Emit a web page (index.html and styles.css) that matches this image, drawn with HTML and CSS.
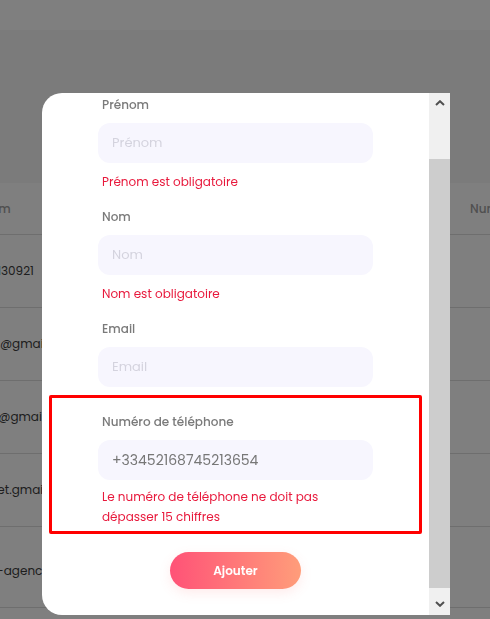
FILE: index.html
```html
<!DOCTYPE html>
<html lang="fr">
<head>
    <meta charset="UTF-8">
    <meta name="viewport" content="width=device-width, initial-scale=1.0">
    <title>Clients</title>
    <link rel="stylesheet" href="styles.css">
</head>
<body>

<div class="page">
    <div class="topbar"></div>

    <div class="card">
        <table class="clients">
            <thead>
                <tr><th>Nom</th><th>Email</th><th>Numéro</th></tr>
            </thead>
            <tbody>
                <tr><td>06130921</td><td></td><td></td></tr>
                <tr><td>luc@gmail.com</td><td></td><td></td></tr>
                <tr><td>ag@gmail.com</td><td></td><td></td></tr>
                <tr><td>onet.gmail.com</td><td></td><td></td></tr>
                <tr><td>rst-agency.fr</td><td></td><td></td></tr>
                <tr><td></td><td></td><td></td></tr>
            </tbody>
        </table>
    </div>
</div>

<div class="overlay"></div>

<div class="modal">
    <form class="modal-body">
        <div class="field">
            <label>Prénom</label>
            <input type="text" placeholder="Prénom">
            <div class="error">Prénom est obligatoire</div>
        </div>

        <div class="field">
            <label>Nom</label>
            <input type="text" placeholder="Nom">
            <div class="error">Nom est obligatoire</div>
        </div>

        <div class="field">
            <label>Email</label>
            <input type="text" placeholder="Email">
        </div>

        <div class="field-wrap invalid">
            <div class="field">
                <label>Numéro de téléphone</label>
                <input type="text" value="+33452168745213654">
                <div class="error narrow">Le numéro de téléphone ne doit pas dépasser 15 chiffres</div>
            </div>
        </div>

        <button type="button" class="button">Ajouter</button>
    </form>

    <div class="scrollbar">
        <div class="sb-top">
            <svg width="10" height="6" viewBox="0 0 10 6"><path d="M1 5 L5 1.2 L9 5" fill="none" stroke="#505050" stroke-width="2"/></svg>
        </div>
        <div class="sb-thumb"></div>
        <div class="sb-bottom">
            <svg width="10" height="6" viewBox="0 0 10 6"><path d="M1 1 L5 4.8 L9 1" fill="none" stroke="#505050" stroke-width="2"/></svg>
        </div>
    </div>
</div>

</body>
</html>
```

FILE: styles.css
```css
body {
    margin: 0;
    font-family: 'Poppins', 'Inter', sans-serif;
    background: #f7f7f7;
    overflow: hidden;
    height: 619px;
}

/* page behind the dialog */
.topbar {
    height: 30px;
    background: #fff;
}

.card {
    margin-top: 153px;
    background: #fff;
    margin-left: -18px;
}

.clients {
    border-collapse: collapse;
    width: 700px;
    font-size: 12px;
}

.clients th {
    height: 51px;
    padding: 0;
    text-align: left;
    font-weight: 500;
    color: #a0a0a0;
    font-size: 12px;
    border-bottom: 1px solid #ddd;
}

.clients td {
    height: 72px;
    padding: 0 0 0 0;
    color: #3c3c3c;
    border-bottom: 1px solid #ddd;
}

.clients tbody tr:nth-child(5) td {
    padding-top: 8px;
}

.clients th:nth-child(1), .clients td:nth-child(1) {
    width: 140px;
}

.clients th:nth-child(2) {
    width: 348px;
}

.overlay {
    position: fixed;
    inset: 0;
    background: rgba(0, 0, 0, 0.5);
}

/* dialog */
.modal {
    position: absolute;
    left: 42px;
    top: 93px;
    width: 408px;
    height: 522px;
    background: #fff;
    border-radius: 20px 0 0 20px;
    display: flex;
    overflow: hidden;
}

.modal-body {
    flex: 1;
    display: flex;
    flex-direction: column;
    align-items: center;
    padding-top: 2px;
    margin: 0;
}

.field {
    width: 275px;
    display: flex;
    flex-direction: column;
    margin-bottom: 15px;
}

.field label {
    font-size: 12px;
    font-weight: 500;
    color: #7a7a7a;
    line-height: 20px;
    padding-left: 4px;
    margin-bottom: 8px;
}

.field input {
    height: 40px;
    box-sizing: border-box;
    border: none;
    border-radius: 12px;
    background: #f7f6fe;
    padding: 0 14px;
    font-family: inherit;
    font-size: 13px;
    color: #777;
    outline: none;
}

.field input::placeholder {
    color: #d4d3de;
}

.field-wrap .field input {
    font-size: 14px;
}

.error {
    color: #e8193c;
    font-size: 12px;
    line-height: 20px;
    padding-left: 4px;
    margin-top: 9px;
}

.error.narrow {
    max-width: 240px;
    margin-top: 7px;
}

.field-wrap {
    width: 367px;
    margin-top: -7px;
    padding: 14px 0 4px;
    display: flex;
    justify-content: center;
    border: 3px solid #ff0000;
    border-radius: 2px;
}

.field-wrap .field {
    margin-bottom: 0;
}

.button {
    margin-top: 18px;
    width: 131px;
    height: 37px;
    border: none;
    border-radius: 19px;
    background: linear-gradient(90deg, #ff5277, #ff9d7a);
    color: #fff;
    font-family: inherit;
    font-size: 12px;
    font-weight: 600;
    padding-top: 2px;
    box-shadow: 0 4px 12px rgba(255, 120, 120, 0.15);
    cursor: pointer;
}

/* scroll track drawn beside the form */
.scrollbar {
    width: 21px;
    display: flex;
    flex-direction: column;
    background: #f0f0f0;
}

.sb-top {
    height: 66px;
    display: flex;
    justify-content: center;
    padding-top: 7px;
    box-sizing: border-box;
}

.sb-thumb {
    flex: 1;
    background: #cdcdcd;
}

.sb-bottom {
    height: 27px;
    display: flex;
    justify-content: center;
    align-items: flex-end;
    padding-bottom: 8px;
    box-sizing: border-box;
}
```
